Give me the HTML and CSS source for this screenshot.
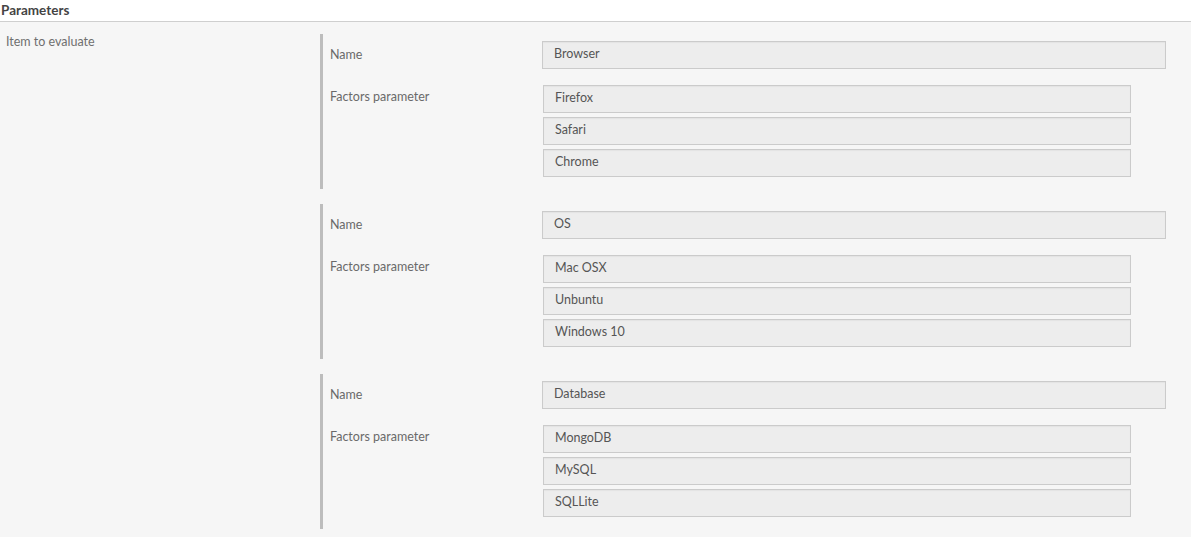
FILE: index.html
```html
<!DOCTYPE html>
<html>
<head>
<meta charset="utf-8">
<link rel="stylesheet" href="styles.css">
</head>
<body>
<div class="page">
  <div class="header">Parameters</div>
  <div class="section">
    <div class="side-label">Item to evaluate</div>
    <div class="groups">
      <div class="group">
        <div class="row">
          <div class="label">Name</div>
          <div class="field name-field">Browser</div>
        </div>
        <div class="row factors">
          <div class="label">Factors parameter</div>
          <div class="list">
            <div class="field">Firefox</div>
            <div class="field">Safari</div>
            <div class="field">Chrome</div>
          </div>
        </div>
      </div>
      <div class="group">
        <div class="row">
          <div class="label">Name</div>
          <div class="field name-field">OS</div>
        </div>
        <div class="row factors">
          <div class="label">Factors parameter</div>
          <div class="list">
            <div class="field">Mac OSX</div>
            <div class="field">Unbuntu</div>
            <div class="field">Windows 10</div>
          </div>
        </div>
      </div>
      <div class="group">
        <div class="row">
          <div class="label">Name</div>
          <div class="field name-field">Database</div>
        </div>
        <div class="row factors">
          <div class="label">Factors parameter</div>
          <div class="list">
            <div class="field">MongoDB</div>
            <div class="field">MySQL</div>
            <div class="field">SQLLite</div>
          </div>
        </div>
      </div>
    </div>
  </div>
</div>
</body>
</html>
```
FILE: styles.css
```css
html, body {
  margin: 0;
  padding: 0;
  background: #f6f6f6;
}
.page {
  font-family: Lato, "Liberation Sans", sans-serif;
  font-size: 12.5px;
  color: #666;
  width: 1191px;
  height: 537px;
  overflow: hidden;
}
.header {
  background: #fff;
  height: 21px;
  line-height: 20px;
  padding-left: 1px;
  font-size: 13.5px;
  font-weight: bold;
  color: #444;
  border-bottom: 1px solid #cfcfcf;
}
.section {
  display: grid;
  grid-template-columns: 320px 1fr;
  padding-top: 12px;
}
.side-label {
  padding-left: 6px;
  line-height: 16px;
  margin-top: 0;
  color: #6f6f6f;
}
.groups {
  display: flex;
  flex-direction: column;
  gap: 15px;
}
.group {
  border-left: 3px solid #bdbdbd;
  padding: 7px 25px 12px 7px;
  display: flex;
  flex-direction: column;
  gap: 16px;
}
.row {
  display: flex;
}
.label {
  width: 212px;
  flex: none;
  line-height: 28px;
  color: #6a6a6a;
}
.factors .label {
  line-height: 24px;
}
.field {
  box-sizing: border-box;
  height: 28px;
  line-height: 24px;
  padding-left: 11px;
  background: #ededed;
  border: 1px solid #cbcbcb;
  box-shadow: inset 0 1px 1px rgba(0,0,0,0.04);
  color: #555;
}
.name-field {
  flex: 1;
}
.list {
  margin-left: 1px;
  width: 588px;
  display: flex;
  flex-direction: column;
  gap: 4px;
}
```
